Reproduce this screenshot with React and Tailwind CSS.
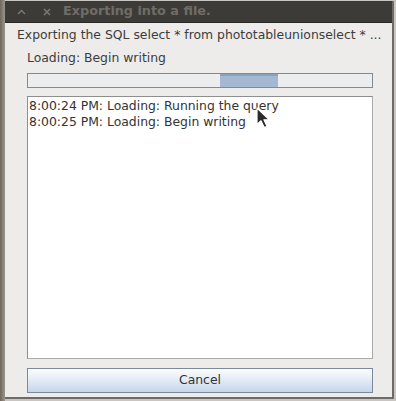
const font = { fontFamily: '"DejaVu Sans", "Liberation Sans", sans-serif' };

const Cursor = () => (
  <svg width="16" height="22" viewBox="0 0 16 22" className="absolute left-[256px] top-[107px]">
    <path d="M1 1 L1 17.5 L5 13.8 L8.2 20.5 L11 19.3 L7.9 12.8 L13.3 12.8 Z" fill="#2a2a2a" stroke="#ffffff" strokeWidth="1.2" strokeLinejoin="round" />
  </svg>
);

export default function App() {
  return (
    <div className="relative w-[396px] h-[401px] flex bg-[#c9c6c1] overflow-hidden" style={font}>
      {/* left shadow strip */}
      <div className="w-[5px] h-full bg-gradient-to-r from-[#6f675b] to-[#9c968d]" />
      {/* window */}
      <div className="w-[389px] h-[398px] mt-[1px] flex flex-col border-r-2 border-b-2 border-[#6e6b66]">
        {/* title bar */}
        <div className="h-[22px] bg-[#3c3b37] flex items-center border-b border-[#2a2926]">
          <div className="w-[26px] flex justify-center ml-[3px]">
            <svg width="9" height="6" viewBox="0 0 9 6">
              <path d="M1 5 L4.5 1.5 L8 5" fill="none" stroke="#7c7a74" strokeWidth="1.4" />
            </svg>
          </div>
          <div className="w-[26px] flex justify-center">
            <svg width="8" height="8" viewBox="0 0 8 8">
              <path d="M1 1 L7 7 M7 1 L1 7" fill="none" stroke="#7c7a74" strokeWidth="1.5" />
            </svg>
          </div>
          <span className="ml-[3px] text-[12.8px] font-bold text-[#6f6d67] leading-none">Exporting into a file.</span>
        </div>
        {/* content */}
        <div className="flex-1 bg-[#edeceb] flex flex-col pt-[4px] pb-[4px]">
          <div className="pl-[12px] text-[12.4px] leading-[16px] text-[#3c3c3c] whitespace-nowrap">
            Exporting the SQL select * from phototableunionselect * ...
          </div>
          <div className="pl-[22px] mt-[7px] text-[12.4px] leading-[16px] text-[#3c3c3c]">Loading: Begin writing</div>
          <div className="mr-[19px] ml-[22px] mt-[7px] h-[15px] border border-[#7f8b99] bg-[#ecedee] relative">
            <div className="absolute left-[192px] top-0 w-[58px] h-full bg-[#a4b9d1] border-t-2 border-[#8ba2bd]" />
          </div>
          <div className="ml-[22px] mr-[19px] mt-[8px] h-[263px] bg-white border border-[#8e8e8e] border-r-[#a9a9a9] border-b-[#a9a9a9] pl-[1px] pt-[1px] text-[12.4px] leading-[16px] text-[#333333]">
            <div>8:00:24 PM: Loading: Running the query</div>
            <div>8:00:25 PM: Loading: Begin writing</div>
          </div>
          <button className="ml-[22px] mr-[19px] mt-[9px] h-[25px] border border-[#7b8a9a] bg-gradient-to-b from-[#fbfcfe] via-[#e2ebf5] to-[#c3d6ea] text-[12.4px] text-[#333333]">
            Cancel
          </button>
        </div>
      </div>
      <Cursor />
    </div>
  );
}
